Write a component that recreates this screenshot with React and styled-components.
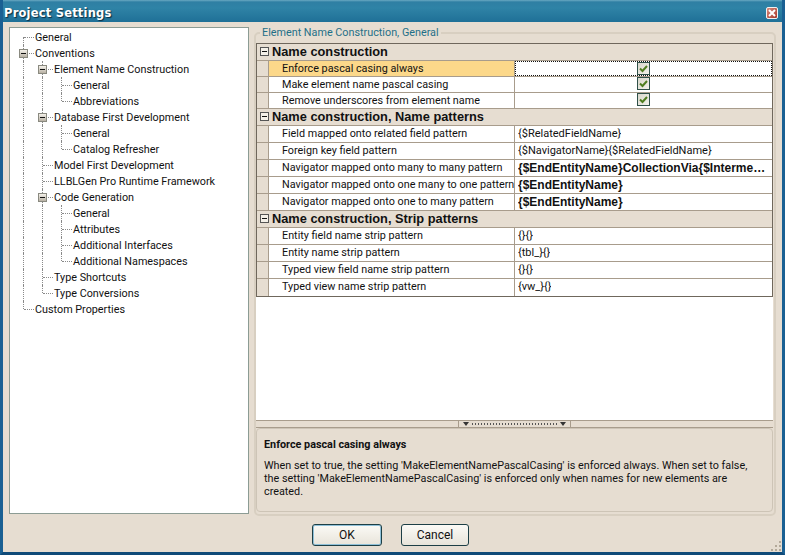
import styled, { createGlobalStyle } from "styled-components";

const GlobalStyle = createGlobalStyle`
  html, body {
    margin: 0;
    padding: 0;
    background: #e6ddd1;
  }
  * {
    box-sizing: border-box;
  }
`;

const TREE = [
  { label: "General", depth: 0 },
  { label: "Conventions", depth: 0, open: true },
  { label: "Element Name Construction", depth: 1, open: true },
  { label: "General", depth: 2 },
  { label: "Abbreviations", depth: 2 },
  { label: "Database First Development", depth: 1, open: true },
  { label: "General", depth: 2 },
  { label: "Catalog Refresher", depth: 2 },
  { label: "Model First Development", depth: 1 },
  { label: "LLBLGen Pro Runtime Framework", depth: 1 },
  { label: "Code Generation", depth: 1, open: true },
  { label: "General", depth: 2 },
  { label: "Attributes", depth: 2 },
  { label: "Additional Interfaces", depth: 2 },
  { label: "Additional Namespaces", depth: 2 },
  { label: "Type Shortcuts", depth: 1 },
  { label: "Type Conversions", depth: 1 },
  { label: "Custom Properties", depth: 0 },
];

const SECTIONS = [
  {
    title: "Name construction",
    rowHeight: 16,
    rows: [
      { name: "Enforce pascal casing always", check: true, selected: true },
      { name: "Make element name pascal casing", check: true },
      { name: "Remove underscores from element name", check: true },
    ],
  },
  {
    title: "Name construction, Name patterns",
    rowHeight: 17,
    rows: [
      { name: "Field mapped onto related field pattern", value: "{$RelatedFieldName}" },
      { name: "Foreign key field pattern", value: "{$NavigatorName}{$RelatedFieldName}" },
      {
        name: "Navigator mapped onto many to many pattern",
        value: "{$EndEntityName}CollectionVia{$IntermediateEntityName}",
        bold: true,
      },
      { name: "Navigator mapped onto one many to one pattern", value: "{$EndEntityName}", bold: true },
      { name: "Navigator mapped onto one to many pattern", value: "{$EndEntityName}", bold: true },
    ],
  },
  {
    title: "Name construction, Strip patterns",
    rowHeight: 17,
    rows: [
      { name: "Entity field name strip pattern", value: "{}{}" },
      { name: "Entity name strip pattern", value: "{tbl_}{}" },
      { name: "Typed view field name strip pattern", value: "{}{}" },
      { name: "Typed view name strip pattern", value: "{vw_}{}" },
    ],
  },
];

// does another node of this depth follow before the branch closes?
const hasNextSibling = (index, depth) => {
  for (let i = index + 1; i < TREE.length; i++) {
    if (TREE[i].depth < depth) return false;
    if (TREE[i].depth === depth) return true;
  }
  return false;
};

const CloseIcon = () => (
  <svg width="8" height="8" viewBox="0 0 8 8" fill="none" stroke="#fff" strokeWidth="2">
    <path d="M1 1l6 6M7 1L1 7" />
  </svg>
);

const CheckIcon = () => (
  <svg width="9" height="9" viewBox="0 0 9 9" fill="none" stroke="#4f7d1f" strokeWidth="2">
    <path d="M1 4.5l2.5 2.5L8 2" />
  </svg>
);

const Grip = () => (
  <GripMark width="12" height="12" viewBox="0 0 12 12" fill="#b3a999">
    <rect x="9" y="1" width="2" height="2" />
    <rect x="5" y="5" width="2" height="2" />
    <rect x="9" y="5" width="2" height="2" />
    <rect x="1" y="9" width="2" height="2" />
    <rect x="5" y="9" width="2" height="2" />
    <rect x="9" y="9" width="2" height="2" />
  </GripMark>
);

const TreeView = () => (
  <TreePanel>
    {TREE.map((node, index) => {
      const last = !hasNextSibling(index, node.depth);
      return (
        <TreeRow key={index}>
          {Array.from({ length: node.depth }, (_, level) => (
            <TreeCell key={level} $line={hasNextSibling(index, level) ? "full" : "none"} />
          ))}
          <TreeCell $line={index === 0 ? "lower" : last ? "upper" : "full"} $branch>
            {node.open && <Expander />}
          </TreeCell>
          <TreeLabel>{node.label}</TreeLabel>
        </TreeRow>
      );
    })}
  </TreePanel>
);

const PropertyGrid = () => (
  <Grid>
    {SECTIONS.map((section) => (
      <section key={section.title}>
        <SectionHeader>
          <SectionToggle />
          {section.title}
        </SectionHeader>
        {section.rows.map((row) => (
          <GridRow key={row.name} $height={section.rowHeight}>
            <Gutter />
            <NameCell $selected={row.selected}>{row.name}</NameCell>
            <ValueCell $bold={row.bold} $focus={row.selected}>
              {row.check ? (
                <CheckBox>
                  <CheckIcon />
                </CheckBox>
              ) : (
                <ValueText>{row.value}</ValueText>
              )}
            </ValueCell>
          </GridRow>
        ))}
      </section>
    ))}
  </Grid>
);

export default function App() {
  return (
    <>
      <GlobalStyle />
      <Window>
        <TitleBar>
          <Title>Project Settings</Title>
          <CloseButton>
            <CloseIcon />
          </CloseButton>
        </TitleBar>
        <Main>
          <TreeView />
          <Group>
            <Legend>Element Name Construction, General</Legend>
            <GridArea>
              <PropertyGrid />
            </GridArea>
            <Splitter>
              <SplitterHandle>
                <SplitterArrow />
                <SplitterDots />
                <SplitterArrow />
              </SplitterHandle>
            </Splitter>
            <Description>
              <DescriptionTitle>Enforce pascal casing always</DescriptionTitle>
              <DescriptionText>
                When set to true, the setting 'MakeElementNamePascalCasing' is enforced always. When set to false,
                the setting 'MakeElementNamePascalCasing' is enforced only when names for new elements are created.
              </DescriptionText>
            </Description>
          </Group>
        </Main>
        <Footer>
          <Button $default>OK</Button>
          <Button>Cancel</Button>
        </Footer>
        <Grip />
      </Window>
    </>
  );
}

// --- Styled Components ---

const Window = styled.div`
  position: relative;
  width: 785px;
  height: 555px;
  display: flex;
  flex-direction: column;
  background: #e6ddd1;
  border-left: 3px solid #1a6093;
  border-right: 3px solid #1a6093;
  border-bottom: 3px solid #0f4a78;
  font-family: Roboto, "Liberation Sans", Arial, sans-serif;
  font-size: 10.8px;
  color: #111;
  overflow: hidden;
`;

const TitleBar = styled.div`
  flex: none;
  height: 22px;
  margin: 0 -3px;
  padding: 3px 7px 0 4px;
  display: flex;
  align-items: center;
  justify-content: space-between;
  background: linear-gradient(#6aa9c2 0, #2f7fa3 2px, #2f83a6 8px, #1f7097 22px);
`;

const Title = styled.div`
  margin-top: 1px;
  font-family: "DejaVu Sans", sans-serif;
  font-size: 11.5px;
  font-weight: 700;
  letter-spacing: 0.2px;
  color: #fff;
  text-shadow: 1px 1px 1px #0b2c40;
`;

const CloseButton = styled.div`
  width: 12px;
  height: 12px;
  display: flex;
  align-items: center;
  justify-content: center;
  background: linear-gradient(135deg, #d98a7c, #a63a2c);
  border: 1px solid #f2f2f2;
  border-radius: 2px;
`;

const Main = styled.div`
  flex: none;
  height: 494px;
  padding: 4px 6px 0;
  display: flex;
  gap: 5px;
`;

const TreePanel = styled.div`
  flex: none;
  width: 240px;
  height: 487px;
  margin-top: 1px;
  padding: 1px 0 0 9px;
  background: #fff;
  border: 1px solid #8c9c94;
`;

const TreeRow = styled.div`
  display: flex;
  align-items: center;
  height: 16px;
`;

const TreeCell = styled.span`
  position: relative;
  flex: none;
  width: 19px;
  height: 16px;

  &::before {
    content: "";
    position: absolute;
    left: 4px;
    top: ${(p) => (p.$line === "lower" ? "8px" : "0")};
    bottom: ${(p) => (p.$line === "upper" ? "8px" : "0")};
    border-left: ${(p) => (p.$line === "none" ? "0" : "1px dotted #8a8a8a")};
  }

  &::after {
    content: "";
    display: ${(p) => (p.$branch ? "block" : "none")};
    position: absolute;
    left: 5px;
    width: 10px;
    top: 8px;
    border-top: 1px dotted #8a8a8a;
  }
`;

const Expander = styled.span`
  position: absolute;
  z-index: 1;
  left: 0;
  top: 4px;
  width: 9px;
  height: 9px;
  background: linear-gradient(#f4f1ea, #b8b1a4);
  border: 1px solid #8a8a80;

  &::after {
    content: "";
    position: absolute;
    left: 1px;
    right: 1px;
    top: 3px;
    height: 1px;
    background: #111;
  }
`;

const TreeLabel = styled.span`
  margin-left: -3px;
  white-space: nowrap;
`;

const Group = styled.fieldset`
  flex: 1;
  min-width: 0;
  height: 490px;
  margin: 0;
  padding: 3px 0 3px;
  display: flex;
  flex-direction: column;
  border: 2px solid #d8cfc1;
  border-radius: 5px;
`;

const Legend = styled.legend`
  margin-left: 4px;
  padding: 0 2px;
  height: 14px;
  line-height: 14px;
  color: #1f7088;
`;

const GridArea = styled.div`
  flex: none;
  height: 377px;
  margin-right: 1px;
  background: #fff;
`;

const Grid = styled.div`
  border: 1px solid #6f675c;
  background: #e6ddd1;
`;

const SectionHeader = styled.div`
  display: flex;
  align-items: center;
  gap: 3px;
  height: 17px;
  padding: 0 0 2px 3px;
  font-family: "Liberation Sans", Arial, sans-serif;
  font-size: 12.8px;
  font-weight: 700;
  background: #e6ddd1;
  border-bottom: 1px solid #a89c8c;
`;

const SectionToggle = styled.span`
  position: relative;
  width: 9px;
  height: 9px;
  background: #f4f0e8;
  border: 1px solid #555;

  &::after {
    content: "";
    position: absolute;
    left: 1px;
    right: 1px;
    top: 3px;
    height: 1px;
    background: #111;
  }
`;

const GridRow = styled.div`
  display: grid;
  grid-template-columns: 12px 246px minmax(0, 1fr);
  grid-template-rows: minmax(0, 1fr);
  height: ${(p) => p.$height}px;
  background: #fff;
  border-bottom: 1px solid #a89c8c;

  section:last-child &:last-child {
    border-bottom: 0;
  }
`;

const Gutter = styled.div`
  background: #e6ddd1;
  border-right: 1px solid #a89c8c;
`;

const NameCell = styled.div`
  padding-left: 13px;
  line-height: 15px;
  white-space: nowrap;
  overflow: hidden;
  background: ${(p) => (p.$selected ? "#fcd88a" : "#fff")};
  border-right: 1px solid #a89c8c;
`;

const ValueCell = styled.div`
  min-width: 0;
  min-height: 0;
  display: flex;
  align-items: ${(p) => (p.$focus !== undefined ? "center" : "flex-start")};
  padding: ${(p) => (p.$bold ? "1px" : "0")} 4px 0 3px;
  font-family: ${(p) => (p.$bold ? '"Liberation Sans", Arial, sans-serif' : "inherit")};
  font-weight: ${(p) => (p.$bold ? 700 : 400)};
  font-size: ${(p) => (p.$bold ? "12px" : "11px")};
  line-height: 15px;
  outline: ${(p) => (p.$focus ? "1px dotted #111" : "none")};
  outline-offset: -1px;
`;

const ValueText = styled.div`
  overflow: hidden;
  white-space: nowrap;
  text-overflow: ellipsis;
`;

const CheckBox = styled.div`
  width: 13px;
  height: 13px;
  flex: none;
  margin: 0 auto;
  display: flex;
  align-items: center;
  justify-content: center;
  background: linear-gradient(135deg, #d9d7cc, #f2f1ea);
  border: 1px solid #2f5048;
`;

const Splitter = styled.div`
  flex: none;
  height: 8px;
  margin: 0 1px 0 0;
  display: flex;
  justify-content: center;
  border-top: 1px solid #a89c8c;
  border-bottom: 1px solid #a89c8c;
`;

const SplitterHandle = styled.div`
  width: 113px;
  display: flex;
  align-items: center;
  justify-content: space-between;
  padding: 0 4px;
  border-left: 1px solid #a89c8c;
  border-right: 1px solid #a89c8c;
`;

const SplitterArrow = styled.span`
  width: 0;
  height: 0;
  border-left: 3px solid transparent;
  border-right: 3px solid transparent;
  border-top: 4px solid #333;
`;

const SplitterDots = styled.span`
  flex: 1;
  height: 2px;
  margin: 0 3px;
  background: repeating-linear-gradient(90deg, #555 0 1px, transparent 1px 3px);
`;

const Description = styled.div`
  flex: none;
  height: 84px;
  margin-right: 1px;
  padding: 9px 7px 0;
  border: 1px solid #cdc4b6;
  border-radius: 4px;
`;

const DescriptionTitle = styled.div`
  font-weight: 700;
  line-height: 13px;
`;

const DescriptionText = styled.p`
  margin: 8px 0 0;
  line-height: 13px;
`;

const Footer = styled.div`
  flex: none;
  display: flex;
  gap: 19px;
  padding: 8px 0 0 309px;
`;

const Button = styled.button`
  width: ${(p) => (p.$default ? "70px" : "68px")};
  height: 22px;
  padding: 0;
  font: inherit;
  font-size: 12px;
  color: #111;
  background: linear-gradient(#fbfaf6, #e8e4da);
  border: 1px solid #1d3f46;
  border-radius: 3px;
  box-shadow: ${(p) => (p.$default ? "inset 0 0 0 1px #8fc0d8" : "none")};
`;

const GripMark = styled.svg`
  position: absolute;
  right: 0;
  bottom: 0;
`;
